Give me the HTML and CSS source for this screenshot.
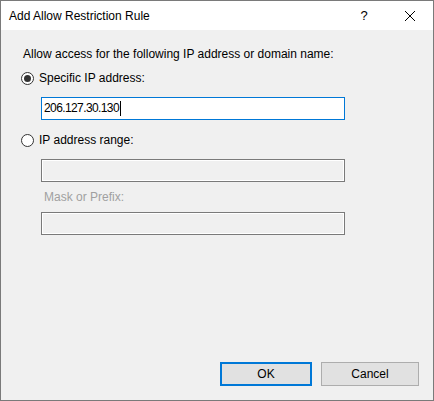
FILE: index.html
```html
<!DOCTYPE html>
<html lang="en">
<head>
  <meta charset="UTF-8" />
  <title>Add Allow Restriction Rule</title>
  <link rel="stylesheet" href="styles.css">
</head>
<body>
  <div class="window">
    <div class="titlebar">
      <span class="title">Add Allow Restriction Rule</span>
      <span class="help">?</span>
      <span class="close">
        <svg width="12" height="12" viewBox="0 0 12 12"><path d="M1 1L11 11M11 1L1 11" stroke="#000" stroke-width="1" fill="none"/></svg>
      </span>
    </div>

    <div class="content">
      <div class="intro">Allow access for the following IP address or domain name:</div>

      <label class="radio-row first">
        <span class="radio checked"></span>
        <span>Specific IP address:</span>
      </label>
      <div class="textbox active"><span class="value">206.127.30.130</span><span class="caret"></span></div>

      <label class="radio-row second">
        <span class="radio"></span>
        <span>IP address range:</span>
      </label>
      <div class="textbox disabled range"></div>
      <div class="sub-label">Mask or Prefix:</div>
      <div class="textbox disabled mask"></div>
    </div>

    <div class="buttons">
      <button class="btn default">OK</button>
      <button class="btn">Cancel</button>
    </div>
  </div>
</body>
</html>
```

FILE: styles.css
```css
body {
  margin: 0;
  font-family: "Liberation Sans", Arial, sans-serif;
  font-size: 12px;
  color: #000;
}
.window {
  width: 434px;
  height: 401px;
  box-sizing: border-box;
  border: 1px solid #7a7a7a;
  background-color: #f0f0f0;
  display: flex;
  flex-direction: column;
}
.titlebar {
  height: 29px;
  background-color: white;
  display: flex;
  align-items: center;
  padding-left: 8px;
}
.title {
  flex: 1;
}
.help {
  width: 46px;
  text-align: center;
  font-size: 13px;
}
.close {
  width: 46px;
  display: flex;
  justify-content: center;
}

.content {
  flex: 1;
  padding: 16px 0 0 22px;
}
.intro {
  line-height: 16px;
}
.radio-row {
  display: flex;
  align-items: center;
  gap: 5px;
  line-height: 16px;
  margin-left: -2px;
}
.radio-row.first {
  margin-top: 8px;
}
.radio-row.second {
  margin-top: 12px;
}
.radio {
  width: 13px;
  height: 13px;
  box-sizing: border-box;
  border: 1px solid #333;
  border-radius: 50%;
  background: white;
  display: flex;
  justify-content: center;
  align-items: center;
}
.radio.checked::after {
  content: "";
  width: 7px;
  height: 7px;
  border-radius: 50%;
  background: #333;
}
.textbox {
  width: 304px;
  height: 23px;
  box-sizing: border-box;
  margin-left: 18px;
  margin-top: 11px;
  padding: 0 2px;
  line-height: 21px;
  display: flex;
  align-items: center;
}
.textbox.active {
  border: 1px solid #0078d7;
  background: white;
}
.value {
  letter-spacing: -0.6px;
}
.caret {
  width: 1px;
  height: 15px;
  background: #000;
  margin-left: 1px;
}
.textbox.disabled {
  border: 1px solid #7a7a7a;
  box-shadow: inset 0 0 0 1px #fff;
}
.sub-label {
  color: #a0a0a0;
  margin: 7px 0 0 21px;
  line-height: 16px;
}
.textbox.mask {
  margin-top: 7px;
}

.buttons {
  display: flex;
  justify-content: flex-end;
  gap: 9px;
  padding: 0 14px 14px 0;
}
.btn {
  font-family: inherit;
  font-size: 12px;
  height: 24px;
  width: 98px;
  background-color: #e1e1e1;
  border: 1px solid #adadad;
  padding: 0;
  color: #000;
}
.btn.default {
  width: 92px;
  border: 2px solid #0078d7;
}
```
